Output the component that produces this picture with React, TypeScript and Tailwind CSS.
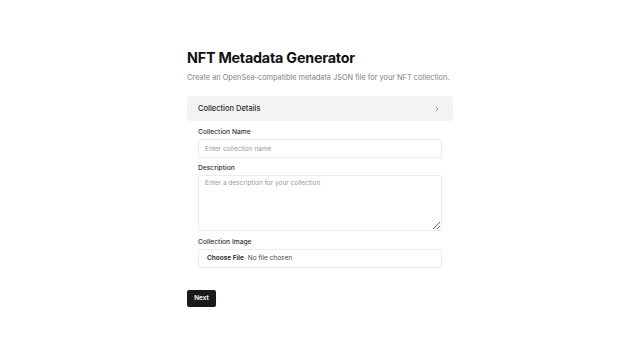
import { ChevronRight } from "lucide-react"

export default function App() {
    return (
        <div className="min-h-screen bg-white font-['Inter',sans-serif] text-[#111]">
            <div className="mx-auto w-[266px] pt-[48px]">
                <h1 className="text-[14.3px] font-bold leading-[20px] tracking-[-0.2px]">NFT Metadata Generator</h1>
                <p className="mt-[4px] whitespace-nowrap text-[7.35px] leading-[12px] text-[#808080]">Create an OpenSea-compatible metadata JSON file for your NFT collection.</p>

                <div className="mt-[12px] flex h-[25px] items-center justify-between rounded-[3px] bg-[#f3f3f4] px-[11px]">
                    <span className="text-[7.5px] font-medium text-[#2a2a2a]">Collection Details</span>
                    <ChevronRight className="mr-[1px] h-[8px] w-[8px] text-[#666]" strokeWidth={2} />
                </div>

                <div className="flex flex-col px-[11px] pt-[6px]">
                    <label className="text-[6.7px] font-medium leading-[10px] text-[#333]">Collection Name</label>
                    <input
                        className="mt-[2px] h-[19px] w-full rounded-[2px] border border-[#ececec] px-[6px] text-[6.5px] placeholder:text-[#999] outline-none"
                        placeholder="Enter collection name"
                    />

                    <label className="mt-[5px] text-[6.7px] font-medium leading-[10px] text-[#333]">Description</label>
                    <textarea
                        className="mt-[2px] h-[56px] w-full rounded-[2px] border border-[#ececec] px-[6px] py-[3px] text-[6.5px] placeholder:text-[#999] outline-none"
                        placeholder="Enter a description for your collection"
                    />

                    <label className="mt-[6px] text-[6.7px] font-medium leading-[10px] text-[#333]">Collection Image</label>
                    <div className="mt-[2px] flex h-[19px] w-full items-center rounded-[2px] border border-[#ececec] px-[8px] text-[6.5px]">
                        <span className="font-semibold text-[#222]">Choose File</span>
                        <span className="ml-[4px] text-[#444]">No file chosen</span>
                    </div>
                </div>

                <button className="mt-[22px] h-[17px] w-[29px] rounded-[2px] bg-[#1a1a1a] text-[6.5px] font-semibold text-white">Next</button>
            </div>
        </div>
    )
}
